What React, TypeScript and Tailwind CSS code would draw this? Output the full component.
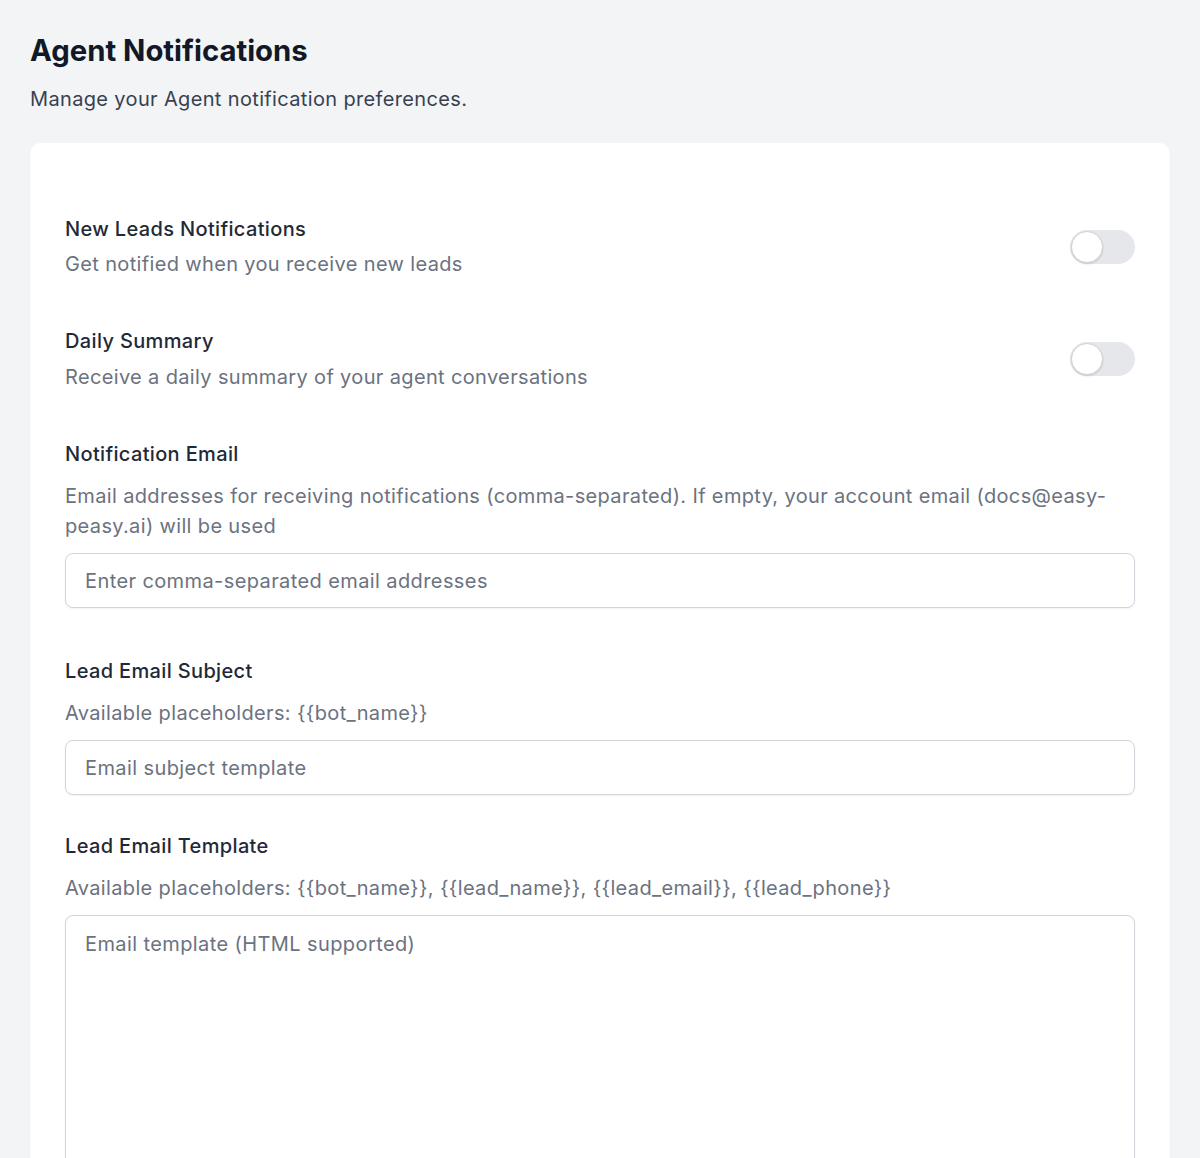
export default function App() {
  return (
    <div className="min-h-[1158px] bg-[#f3f4f6] px-[30px] pt-[31px] font-['Inter',sans-serif] tracking-[0.35px]">
      <h1 className="text-[29.3px] leading-[40px] font-bold text-[#111827] tracking-[0px]">Agent Notifications</h1>
      <p className="mt-[13px] text-[20px] leading-[30px] text-[#374151]">
        Manage your Agent notification preferences.
      </p>
      <div className="mt-[29px] rounded-[10px] bg-white shadow-[0_1px_2px_rgba(0,0,0,0.05)] px-[35px] pt-[71px] pb-[40px]">
        <div className="flex items-center justify-between">
          <div>
            <div className="text-[20px] leading-[30px] font-medium text-[#1f2937]">New Leads Notifications</div>
            <div className="mt-[5px] text-[20px] leading-[30px] text-[#6b7280]">Get notified when you receive new leads</div>
          </div>
          <Toggle />
        </div>
        <div className="mt-[47px] flex items-center justify-between">
          <div>
            <div className="text-[20px] leading-[30px] font-medium text-[#1f2937]">Daily Summary</div>
            <div className="mt-[6px] text-[20px] leading-[30px] text-[#6b7280]">Receive a daily summary of your agent conversations</div>
          </div>
          <Toggle />
        </div>

        <div className="mt-[47px]">
          <div className="text-[20px] leading-[30px] font-medium text-[#1f2937]">Notification Email</div>
          <div className="mt-[12px] text-[20px] leading-[30px] text-[#6b7280]">
            Email addresses for receiving notifications (comma-separated). If empty, your account email (docs@easy-peasy.ai) will be used
          </div>
          <input
            className="mt-[12px] block h-[55px] w-full rounded-[8px] border border-[#d1d5db] bg-white px-[19px] text-[20px] tracking-[0.4px] text-[#111827] placeholder:text-[#6b7280] shadow-[0_1px_2px_rgba(0,0,0,0.05)] outline-none"
            placeholder="Enter comma-separated email addresses"
          />
        </div>

        <div className="mt-[48px]">
          <div className="text-[20px] leading-[30px] font-medium text-[#1f2937]">Lead Email Subject</div>
          <div className="mt-[12px] text-[20px] leading-[30px] text-[#6b7280]">Available placeholders: {"{{bot_name}}"}</div>
          <input
            className="mt-[12px] block h-[55px] w-full rounded-[8px] border border-[#d1d5db] bg-white px-[19px] text-[20px] tracking-[0.4px] text-[#111827] placeholder:text-[#6b7280] shadow-[0_1px_2px_rgba(0,0,0,0.05)] outline-none"
            placeholder="Email subject template"
          />
        </div>

        <div className="mt-[36px]">
          <div className="text-[20px] leading-[30px] font-medium text-[#1f2937]">Lead Email Template</div>
          <div className="mt-[12px] text-[20px] leading-[30px] text-[#6b7280]">
            Available placeholders: {"{{bot_name}}, {{lead_name}}, {{lead_email}}, {{lead_phone}}"}
          </div>
          <textarea
            className="mt-[12px] block h-[300px] w-full resize-none rounded-[8px] border border-[#d1d5db] bg-white px-[19px] py-[13px] text-[20px] leading-[30px] tracking-[0.4px] text-[#111827] placeholder:text-[#6b7280] shadow-[0_1px_2px_rgba(0,0,0,0.05)] outline-none"
            placeholder="Email template (HTML supported)"
          />
        </div>
      </div>
    </div>
  );
}

function Toggle() {
  return (
    <div className="relative h-[34px] w-[65px] shrink-0 rounded-full bg-[#e5e7eb]">
      <div className="absolute left-[1px] top-[1px] h-[32px] w-[32px] rounded-full border border-[#d1d5db] bg-white shadow-[0_1px_2px_rgba(0,0,0,0.15)]" />
    </div>
  );
}
